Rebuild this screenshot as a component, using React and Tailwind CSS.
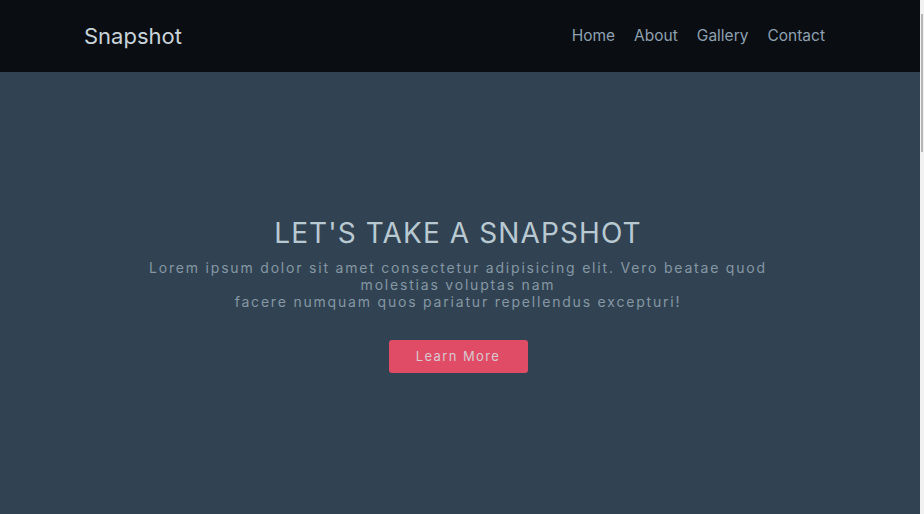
import React from "react";

const links = ["Home", "About", "Gallery", "Contact"];

const App = () => {
  return (
    <div className="flex h-[514px] w-[924px] overflow-hidden font-['Inter',sans-serif]">
      <div className="flex w-[920px] flex-col">
        <header className="flex h-[72px] items-center justify-between bg-[#0a0e12] pl-[84px] pr-[95px]">
          <a className="text-[22px] leading-[28px] text-[#c9d3da]">Snapshot</a>
          <nav className="flex gap-[19px] text-[15.5px] text-[#8ea1b1]">
            {links.map((l) => (
              <a key={l}>{l}</a>
            ))}
          </nav>
        </header>
        <main className="flex flex-1 flex-col items-center justify-center bg-[#314352] pr-[4px] pt-[3px] text-center">
          <h1 className="text-[28px] leading-[34px] tracking-[1.1px] text-[#b9c9d2]">
            LET'S TAKE A SNAPSHOT
          </h1>
          <p className="mt-[9px] max-w-[640px] text-[14px] leading-[17px] tracking-[1.8px] text-[#8597a4]">
            Lorem ipsum dolor sit amet consectetur adipisicing elit. Vero beatae quod molestias voluptas nam
            <br />
            facere numquam quos pariatur repellendus excepturi!
          </p>
          <button className="mt-[30px] h-[33px] w-[139px] rounded-[3px] bg-[#e04c66] text-[13px] tracking-[1.4px] text-[#d8c8d0]">
            Learn More
          </button>
        </main>
      </div>
      <div className="flex w-[4px] flex-col bg-[#f1f1f1]">
        <div className="ml-[1px] mt-[14px] h-[138px] w-[2px] bg-[#b5b5b5]" />
      </div>
    </div>
  );
};

export default App;
